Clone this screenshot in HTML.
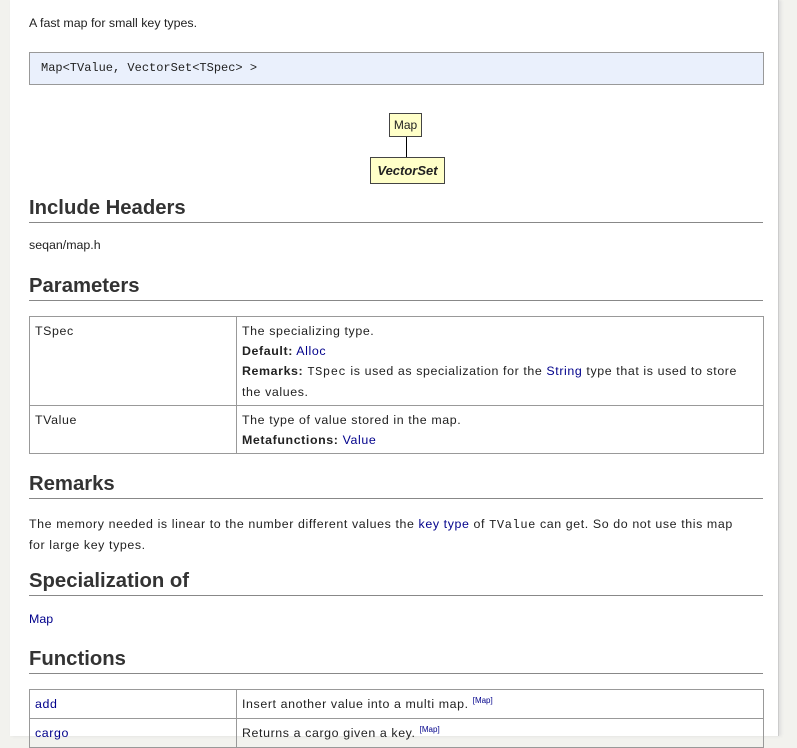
<!DOCTYPE html>
<html><head><meta charset="utf-8"><style>
html,body{margin:0;padding:0;width:797px;height:736px;overflow:hidden;background:#f2f2ee;}
body{font-family:"Liberation Sans",sans-serif;font-size:12.4px;color:#222;}
*{box-sizing:border-box;}
#page{position:absolute;left:10px;top:0;width:769px;height:736px;background:#fff;border-right:1px solid #ccc;box-shadow:2px 0 3px #ddd;}
.a{position:absolute;white-space:nowrap;}
a{color:#00008b;text-decoration:none;}
h2{position:absolute;left:29px;width:734px;margin:0;font-size:20.3px;font-weight:bold;color:#333;border-bottom:1px solid #888;height:27px;line-height:24px;}
.mono{font-family:"Liberation Mono",monospace;font-size:12px;}
table{position:absolute;left:29px;width:735px;border-collapse:collapse;}
td{border:1px solid #999;vertical-align:top;padding:4px 5px 3px;line-height:20px;letter-spacing:0.6px;}
td.l{width:207px;}
.w{letter-spacing:0.6px;}
sup{font-size:8px;line-height:0;vertical-align:5px;letter-spacing:0;}
</style></head><body>
<div id="page"></div>
<div class="a" style="left:29px;top:16px;">A fast map for small key types.</div>
<div class="a mono" style="left:29px;top:52px;width:735px;height:33px;background:#eaf0fc;border:1px solid #999;padding-left:11px;line-height:31px;">Map&lt;TValue, VectorSet&lt;TSpec&gt; &gt;</div>
<div class="a" style="left:389px;top:113px;width:33px;height:24px;background:#ffffc8;border:1px solid #444;text-align:center;line-height:22px;font-size:12px;">Map</div>
<div class="a" style="left:406px;top:137px;width:1px;height:20px;background:#000;"></div>
<div class="a" style="left:370px;top:157px;width:75px;height:27px;background:#ffffc8;border:1px solid #444;text-align:center;line-height:25px;font-size:13px;font-weight:bold;font-style:italic;">VectorSet</div>
<h2 style="top:196px;">Include Headers</h2>
<div class="a" style="left:29px;top:238px;">seqan/map.h</div>
<h2 style="top:274px;">Parameters</h2>
<table style="top:316px;">
<tr><td class="l" style="height:88px;">TSpec</td><td>The specializing type.<br><b>Default:</b> <a>Alloc</a><br><b>Remarks:</b> <span class="mono">TSpec</span> is used as specialization for the <a>String</a> type that is used to store<br>the values.</td></tr>
<tr><td class="l">TValue</td><td>The type of value stored in the map.<br><b>Metafunctions:</b> <a>Value</a></td></tr>
</table>
<h2 style="top:472px;">Remarks</h2>
<div class="a w" style="left:29px;top:514px;line-height:20px;">The memory needed is linear to the number different values the <a>key type</a> of <span class="mono">TValue</span> can get. So do not use this map<br>for large key types.</div>
<h2 style="top:569px;">Specialization of</h2>
<div class="a" style="left:29px;top:612px;"><a>Map</a></div>
<h2 style="top:647px;">Functions</h2>
<table style="top:689px;">
<tr><td class="l" style="height:29px;"><a>add</a></td><td>Insert another value into a multi map. <sup><a>[Map]</a></sup></td></tr>
<tr><td class="l" style="height:29px;"><a>cargo</a></td><td>Returns a cargo given a key. <sup><a>[Map]</a></sup></td></tr>
</table>
</body></html>
